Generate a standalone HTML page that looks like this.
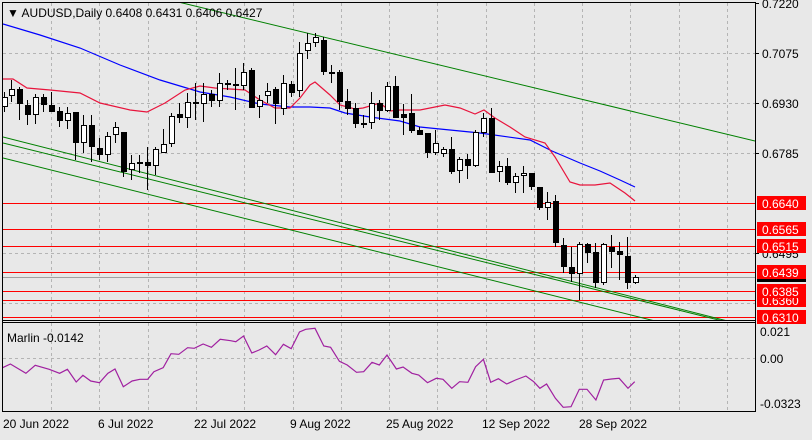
<!DOCTYPE html>
<html><head><meta charset="utf-8"><style>
html,body{margin:0;padding:0;background:#e8e8e8;}
body{width:812px;height:435px;overflow:hidden;font-family:"Liberation Sans",Tahoma,sans-serif;}
svg text{font-family:"Liberation Sans",Tahoma,sans-serif;font-size:12px;}
</style></head><body>
<svg id="s" width="812" height="435" xmlns="http://www.w3.org/2000/svg">
<defs><clipPath id="mc"><rect x="3" y="3" width="752" height="317"/></clipPath></defs>
<rect x="0" y="0" width="812" height="435" fill="#e8e8e8"/>
<g id="grid" stroke="#b4b4b4" stroke-dasharray="3,3" stroke-width="1" shape-rendering="crispEdges"></g>
<g id="hl" shape-rendering="crispEdges"></g>
<g id="ma" fill="none" clip-path="url(#mc)"></g>
<g id="sub" fill="none"></g>
<g id="c" shape-rendering="crispEdges"></g>
<g id="frame" stroke="#000" fill="none" shape-rendering="crispEdges">
<line x1="2.5" y1="2" x2="2.5" y2="411"/>
<line x1="2" y1="2.5" x2="756" y2="2.5"/>
<line x1="755.5" y1="2" x2="755.5" y2="412"/>
<line x1="2" y1="320.5" x2="756" y2="320.5"/>
<line x1="2" y1="322.5" x2="756" y2="322.5"/>
<line x1="2" y1="411.5" x2="756" y2="411.5"/>
</g>
<g id="lab" fill="#000" shape-rendering="crispEdges"></g>
<text x="7" y="17" fill="#000">▼ AUDUSD,Daily  0.6408 0.6431 0.6406 0.6427</text>
<text x="7" y="342" fill="#000">Marlin -0.0142</text>
</svg>
<script>
var NS="http://www.w3.org/2000/svg";
function el(p,t,a,txt){var e=document.createElementNS(NS,t);for(var k in a)e.setAttribute(k,a[k]);if(txt!=null)e.textContent=txt;document.getElementById(p).appendChild(e);return e;}
var vx=[51,99,148,196,244,293,341,389,437,486,534,582,630,679,727];
vx.forEach(function(x){el('grid','line',{x1:x+.5,y1:3,x2:x+.5,y2:320});el('grid','line',{x1:x+.5,y1:323,x2:x+.5,y2:411});});
[53,103,153,253,303].forEach(function(y){el('grid','line',{x1:3,y1:y+.5,x2:755,y2:y+.5});});
el('grid','line',{x1:3,y1:358.5,x2:755,y2:358.5});
var g=[[170,0,755,141],[3,137,755,328],[3,143,755,329],[3,158,755,346]];
g.forEach(function(l){el('ma','line',{x1:l[0],y1:l[1],x2:l[2],y2:l[3],stroke:'#008000','stroke-width':1});});
el('hl','rect',{x:3,y:277,width:752,height:1,fill:'#a0a0a0'});
var red=[[203,'0.6640'],[229,'0.6565'],[246,'0.6515'],[272,'0.6439'],[300,'0.6360'],[291,'0.6385'],[317,'0.6310']];
red.forEach(function(r){el('hl','rect',{x:3,y:r[0],width:752,height:1,fill:'#ff0000'});});
[[3,'0.7220'],[53,'0.7075'],[103,'0.6930'],[153,'0.6785'],[253,'0.6495']].forEach(function(r){el('lab','rect',{x:755,y:r[0],width:4,height:1,fill:'#000'});el('lab','text',{x:762,y:r[0]+5},r[1]);});
el('lab','rect',{x:757,y:279,width:49,height:3,fill:'#000'});
red.forEach(function(r){el('lab','rect',{x:757,y:r[0]-7,width:49,height:14,fill:'#ff0000'});el('lab','text',{x:762,y:r[0]+5,fill:'#fff'},r[1]);});
[[331,'0.021'],[358,'0.00'],[403,'-0.0323']].forEach(function(r){el('lab','text',{x:760,y:r[0]+5},r[1]);});
[[3,'20 Jun 2022'],[98,'6 Jul 2022'],[194,'22 Jul 2022'],[290,'9 Aug 2022'],[386,'25 Aug 2022'],[482,'12 Sep 2022'],[579,'28 Sep 2022']].forEach(function(r){el('lab','text',{x:r[0],y:428},r[1]);});
function pl(g,pts,col){el(g,'polyline',{points:pts.map(function(p){return p.join(',')}).join(' '),stroke:col,'stroke-width':1.2});}
pl('ma',[[3,24],[40,35],[80,48],[120,65],[160,80],[200,92],[230,97],[260,104],[290,107],[310,107],[330,108],[345,113],[370,117],[400,121],[420,127],[460,131],[480,133],[530,140],[552,151],[580,163],[600,171],[620,180],[635,187]],'#0000ff');
pl('ma',[[3,79],[13,79],[27,88],[50,90],[80,93],[100,103],[130,110],[147,112],[165,103],[185,90],[200,86],[215,88],[245,90],[260,100],[275,108],[290,108],[300,98],[310,85],[315,82],[330,95],[340,105],[355,109],[363,108],[380,103],[390,111],[400,110],[420,110],[445,105],[460,108],[475,114],[484,110],[495,118],[510,127],[525,137],[545,143],[555,157],[570,182],[580,185],[595,185],[610,183],[625,193],[635,201]],'#e8143c');
var C=[[4,97,107,92,112,'w'],[11,89,96,80,102,'w'],[19,89,104,87,120,'b'],[27,105,115,100,125,'b'],[35,97,115,94,124,'w'],[43,97,105,94,112,'b'],[51,105,112,92,112,'b'],[59,111,121,107,127,'b'],[67,113,121,107,129,'w'],[75,112,143,112,160,'b'],[83,125,143,115,153,'w'],[91,125,147,115,162,'b'],[99,148,155,138,160,'b'],[107,136,155,132,162,'w'],[115,127,135,122,143,'w'],[123,132,172,132,177,'b'],[131,163,170,155,180,'w'],[139,162,163,155,173,'x'],[147,162,166,147,190,'b'],[155,149,166,147,175,'w'],[163,144,153,129,153,'w'],[171,116,144,113,147,'w'],[179,114,118,103,123,'b'],[187,102,118,93,128,'w'],[195,102,104,83,120,'b'],[203,94,104,83,122,'w'],[211,94,101,90,107,'b'],[219,83,101,73,107,'w'],[227,83,84,80,90,'x'],[235,84,85,68,110,'x'],[243,72,86,63,90,'w'],[251,70,108,68,108,'b'],[259,100,107,95,118,'w'],[267,91,96,83,103,'w'],[275,89,104,87,124,'b'],[283,83,109,75,115,'w'],[291,84,93,81,97,'b'],[299,53,91,42,97,'w'],[307,43,51,33,59,'w'],[315,37,43,33,47,'w'],[323,40,72,37,75,'b'],[331,72,73,65,83,'x'],[339,72,102,70,110,'b'],[347,101,109,89,115,'b'],[355,108,124,103,128,'b'],[363,123,124,115,128,'x'],[371,103,123,92,129,'w'],[379,103,111,100,120,'b'],[387,86,111,82,112,'w'],[395,86,118,76,118,'b'],[403,114,118,104,135,'b'],[411,113,131,94,133,'b'],[419,130,135,127,135,'b'],[427,133,153,133,158,'b'],[435,143,153,130,155,'w'],[443,149,154,147,157,'w'],[451,149,172,137,174,'b'],[459,159,171,157,183,'w'],[467,159,166,154,179,'b'],[475,132,166,130,167,'w'],[483,118,133,113,137,'w'],[491,118,173,108,173,'b'],[499,166,172,161,182,'w'],[507,166,183,158,185,'b'],[515,176,183,173,193,'w'],[523,173,176,166,193,'w'],[531,173,187,173,190,'b'],[539,187,208,187,210,'b'],[547,202,208,192,220,'w'],[555,201,243,195,247,'b'],[563,245,267,238,273,'b'],[571,267,274,247,282,'b'],[579,244,274,242,300,'w'],[587,244,253,243,263,'b'],[595,252,283,243,288,'b'],[603,244,283,243,285,'w'],[611,247,252,235,268,'b'],[619,251,255,242,280,'b'],[627,256,283,237,289,'b'],[635,277,283,275,284,'w']];
C.forEach(function(c){var x=c[0];el('c','rect',{x:x,y:c[3],width:1,height:c[4]-c[3],fill:'#000'});
 if(c[5]=='x'){el('c','rect',{x:x-2,y:c[1],width:6,height:2,fill:'#000'});}
 else if(c[5]=='b'){el('c','rect',{x:x-2,y:c[1],width:6,height:Math.max(2,c[2]-c[1]),fill:'#000'});}
 else{el('c','rect',{x:x-1.5,y:c[1]+.5,width:5,height:Math.max(1,c[2]-c[1]-1),fill:'#fff',stroke:'#000'});}});
var M=[[5,143],[20,132],[50,160],[68,136],[95,148],[115,160],[130,148],[147,186],[160,166],[175,183],[192,188],[208,160],[222,147],[238,200],[255,183],[270,178],[285,178],[297,155],[315,143],[330,101],[345,103],[362,83],[375,85],[392,72],[408,82],[425,58],[445,62],[455,65],[470,48],[486,99],[500,90],[515,78],[532,104],[547,73],[562,86],[578,36],[590,28],[608,25],[625,78],[638,82],[655,124],[670,135],[688,157],[702,155],[718,127],[732,135],[747,105],[765,147],[778,141],[795,160],[808,165],[825,188],[842,175],[855,178],[872,205],[887,185],[903,187],[918,140],[933,118],[947,187],[962,176],[978,192],[995,180],[1015,168],[1030,185],[1042,205],[1055,192],[1072,235],[1087,262],[1102,260],[1118,208],[1133,208],[1150,240],[1165,180],[1180,177],[1195,175],[1212,205],[1225,185]];
pl('sub',M.map(function(p){return [(p[0]/1.93).toFixed(1),(320+p[1]/3).toFixed(1)]}),'#a020a0');
</script>
</body></html>
